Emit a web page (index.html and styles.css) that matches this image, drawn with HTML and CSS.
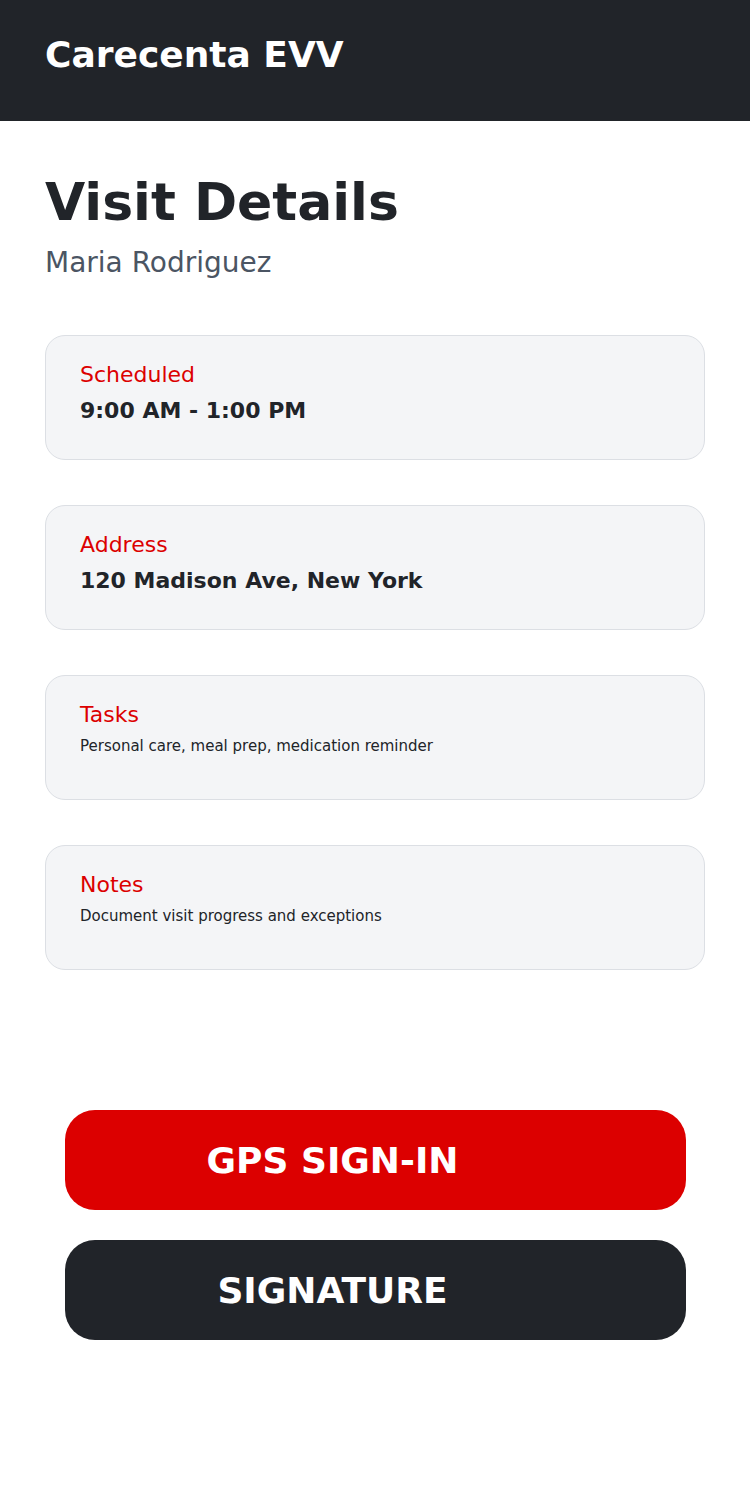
FILE: index.html
```html
<!DOCTYPE html>
<html lang="en">
<head>
    <meta charset="UTF-8">
    <meta name="viewport" content="width=device-width, initial-scale=1.0">
    <title>Carecenta EVV - Visit Details</title>
    <link rel="stylesheet" href="styles.css">
</head>
<body>

<header class="app-header">
    <span class="brand">Carecenta EVV</span>
</header>

<main class="visit">
    <h1 class="visit-title">Visit Details</h1>
    <div class="client-name">Maria Rodriguez</div>

    <!-- Visit info cards -->
    <section class="info-list">
        <div class="info-card">
            <div class="info-label">Scheduled</div>
            <div class="info-value strong">9:00 AM - 1:00 PM</div>
        </div>
        <div class="info-card">
            <div class="info-label">Address</div>
            <div class="info-value strong">120 Madison Ave, New York</div>
        </div>
        <div class="info-card">
            <div class="info-label">Tasks</div>
            <div class="info-value">Personal care, meal prep, medication reminder</div>
        </div>
        <div class="info-card">
            <div class="info-label">Notes</div>
            <div class="info-value">Document visit progress and exceptions</div>
        </div>
    </section>

    <!-- Actions -->
    <section class="actions">
        <button class="action-btn gps">GPS SIGN-IN</button>
        <button class="action-btn signature">SIGNATURE</button>
    </section>
</main>

</body>
</html>
```

FILE: styles.css
```css
/* General Styles */
body {
    margin: 0;
    padding: 0;
    background: #fff;
    color: #212429;
    font-family: "DejaVu Sans", Verdana, sans-serif;
}

/* Header */
.app-header {
    box-sizing: border-box;
    height: 121px;
    padding: 34px 45px 0;
    background-color: #212429;
}

.brand {
    color: #fff;
    font-size: 36px;
    font-weight: bold;
}

/* Page Content */
.visit {
    padding: 0 45px;
}

.visit-title {
    margin: 51px 0 0;
    font-size: 52px;
    font-weight: bold;
    line-height: normal;
}

.client-name {
    margin-top: 14px;
    font-size: 28px;
    color: #4b5563;
}

/* Info Cards */
.info-list {
    display: flex;
    flex-direction: column;
    gap: 45px;
    margin-top: 56px;
}

.info-card {
    box-sizing: border-box;
    height: 125px;
    padding: 26px 34px 0;
    background-color: #f4f5f7;
    border: 1px solid #dcdfe4;
    border-radius: 20px;
}

.info-label {
    font-size: 22px;
    color: #dc0000;
}

.info-value {
    margin-top: 10px;
    font-size: 15px;
    color: #212429;
}

.info-value.strong {
    margin-top: 11px;
    font-size: 22px;
    font-weight: bold;
}

/* Action Buttons */
.actions {
    display: flex;
    flex-direction: column;
    gap: 30px;
    margin-top: 140px;
    padding: 0 19px 0 20px;
}

.action-btn {
    display: flex;
    justify-content: center;
    align-items: center;
    height: 100px;
    padding: 0 86px 0 0;
    border: none;
    border-radius: 30px;
    color: #fff;
    font-family: inherit;
    font-size: 36px;
    font-weight: bold;
    cursor: pointer;
}

.gps {
    background-color: #dc0000;
}

.signature {
    background-color: #212429;
}
```
